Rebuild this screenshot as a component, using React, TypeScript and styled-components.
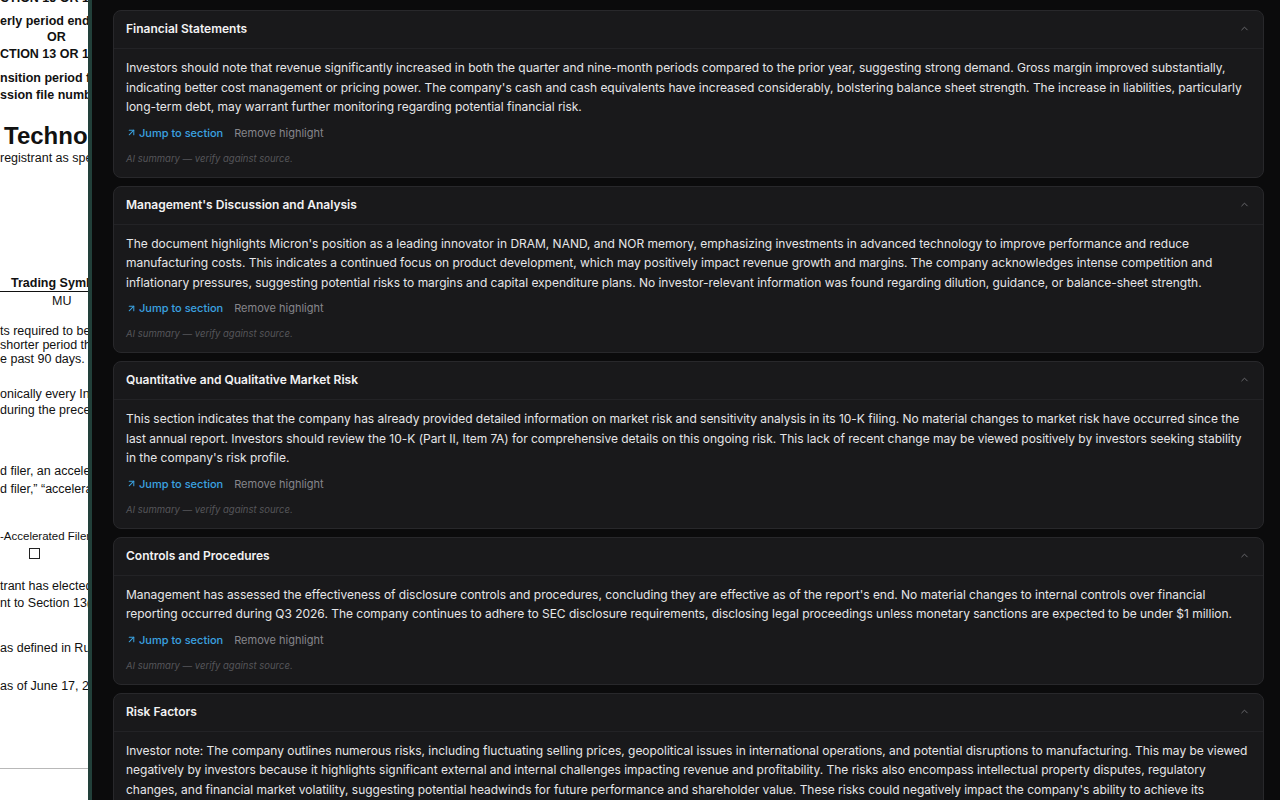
import React from 'react';
import styled, { createGlobalStyle } from 'styled-components';
import { ArrowUpRight, ChevronUp } from 'lucide-react';

const GlobalStyle = createGlobalStyle`
  html, body {
    margin: 0;
    height: 100%;
    background: #0b0b0c;
    overflow: hidden;
  }

  #root {
    height: 100%;
  }
`;

type Section = {
  title: string;
  summary: string;
};

const sections: Section[] = [
  {
    title: 'Financial Statements',
    summary:
      "Investors should note that revenue significantly increased in both the quarter and nine-month periods compared to the prior year, suggesting strong demand. Gross margin improved substantially, indicating better cost management or pricing power. The company's cash and cash equivalents have increased considerably, bolstering balance sheet strength. The increase in liabilities, particularly long-term debt, may warrant further monitoring regarding potential financial risk.",
  },
  {
    title: "Management's Discussion and Analysis",
    summary:
      "The document highlights Micron's position as a leading innovator in DRAM, NAND, and NOR memory, emphasizing investments in advanced technology to improve performance and reduce manufacturing costs. This indicates a continued focus on product development, which may positively impact revenue growth and margins. The company acknowledges intense competition and inflationary pressures, suggesting potential risks to margins and capital expenditure plans. No investor-relevant information was found regarding dilution, guidance, or balance-sheet strength.",
  },
  {
    title: 'Quantitative and Qualitative Market Risk',
    summary:
      "This section indicates that the company has already provided detailed information on market risk and sensitivity analysis in its 10-K filing. No material changes to market risk have occurred since the last annual report. Investors should review the 10-K (Part II, Item 7A) for comprehensive details on this ongoing risk. This lack of recent change may be viewed positively by investors seeking stability in the company's risk profile.",
  },
  {
    title: 'Controls and Procedures',
    summary:
      "Management has assessed the effectiveness of disclosure controls and procedures, concluding they are effective as of the report's end. No material changes to internal controls over financial reporting occurred during Q3 2026. The company continues to adhere to SEC disclosure requirements, disclosing legal proceedings unless monetary sanctions are expected to be under $1 million.",
  },
  {
    title: 'Risk Factors',
    summary:
      "Investor note: The company outlines numerous risks, including fluctuating selling prices, geopolitical issues in international operations, and potential disruptions to manufacturing. This may be viewed negatively by investors because it highlights significant external and internal challenges impacting revenue and profitability. The risks also encompass intellectual property disputes, regulatory changes, and financial market volatility, suggesting potential headwinds for future performance and shareholder value. These risks could negatively impact the company's ability to achieve its strategic goals and sustain its competitive position over time.",
  },
];

type DocLineProps = {
  $gap?: number;
  $lh?: number;
  $size?: number;
  $bold?: boolean;
  $indent?: number;
};

export default function App() {
  return (
    <>
      <GlobalStyle />
      <Layout>
        <DocPane>
          <DocLine $bold $gap={-10}>CTION 15 OR 15(d)</DocLine>
          <DocLine $bold $gap={7}>erly period ended</DocLine>
          <DocLine $bold $indent={47}>OR</DocLine>
          <DocLine $bold $gap={1}>CTION 13 OR 15(d)</DocLine>
          <DocLine $bold $gap={8}>nsition period from</DocLine>
          <DocLine $bold $gap={1}>ssion file number</DocLine>
          <DocLine $bold $size={24} $lh={28} $gap={19} $indent={4}>
            Technology
          </DocLine>
          <DocLine>registrant as specified</DocLine>
          <TableHead>
            <DocLine $bold $gap={109} $indent={11}>
              Trading Symbol
            </DocLine>
          </TableHead>
          <DocLine $gap={1} $indent={52}>MU</DocLine>
          <DocPara $gap={15} $lh={14}>
            <span>ts required to be filed</span>
            <span>shorter period that</span>
            <span>e past 90 days.</span>
          </DocPara>
          <DocPara $gap={20} $lh={16}>
            <span>onically every Interactive</span>
            <span>during the preceding</span>
          </DocPara>
          <DocPara $gap={44} $lh={18}>
            <span>d filer, an accelerated</span>
            <span>d filer,” “accelerated</span>
          </DocPara>
          <DocLine $gap={31} $lh={14} $size={11.5}>
            -Accelerated Filer
          </DocLine>
          <Checkbox />
          <DocPara $gap={19} $lh={17}>
            <span>trant has elected not</span>
            <span>nt to Section 13(a)</span>
          </DocPara>
          <DocLine $gap={28}>as defined in Rule</DocLine>
          <DocLine $gap={22}>as of June 17, 2026</DocLine>
          <PageRule />
        </DocPane>
        <Divider />
        <Panel>
          {sections.map((s) => (
            <Card key={s.title}>
              <CardHeader>
                <CardTitle>{s.title}</CardTitle>
                <ChevronUp size={11} strokeWidth={2} color="#6e6e73" />
              </CardHeader>
              <CardBody>
                <Summary>{s.summary}</Summary>
                <Actions>
                  <JumpLink>
                    <ArrowUpRight size={11} strokeWidth={2.2} />
                    Jump to section
                  </JumpLink>
                  <RemoveLink>Remove highlight</RemoveLink>
                </Actions>
                <Disclaimer>AI summary — verify against source.</Disclaimer>
              </CardBody>
            </Card>
          ))}
        </Panel>
      </Layout>
    </>
  );
}

const Layout = styled.div`
  display: flex;
  height: 100vh;
  overflow: hidden;
`;

const DocPane = styled.div`
  flex: 0 0 88px;
  background: #ffffff;
  overflow: hidden;
  color: #111111;
  font-family: 'Liberation Sans', Arial, sans-serif;
  font-size: 12.5px;
`;

const DocLine = styled.div<DocLineProps>`
  margin-top: ${(p) => p.$gap ?? 0}px;
  padding-left: ${(p) => p.$indent ?? 0}px;
  line-height: ${(p) => p.$lh ?? 16}px;
  font-size: ${(p) => p.$size ?? 12.5}px;
  font-weight: ${(p) => (p.$bold ? 700 : 400)};
  white-space: nowrap;
`;

const DocPara = styled.div<DocLineProps>`
  display: flex;
  flex-direction: column;
  margin-top: ${(p) => p.$gap ?? 0}px;
  line-height: ${(p) => p.$lh ?? 16}px;
  white-space: nowrap;
`;

const TableHead = styled.div`
  border-bottom: 1px solid #111111;
`;

const Checkbox = styled.div`
  width: 9px;
  height: 9px;
  margin: 5px 0 0 29px;
  border: 1px solid #222222;
`;

const PageRule = styled.div`
  height: 1px;
  margin-top: 74px;
  background: #b8b8b8;
`;

const Divider = styled.div`
  flex: 0 0 4px;
  background: #22403a;
`;

const Panel = styled.div`
  flex: 1;
  display: flex;
  flex-direction: column;
  gap: 8px;
  padding: 10px 16px 0 21px;
  overflow: hidden;
  background: #0b0b0c;
  font-family: Inter, 'Noto Sans', sans-serif;
`;

const Card = styled.section`
  flex-shrink: 0;
  background: #19191b;
  border: 1px solid #28282b;
  border-radius: 8px;
`;

const CardHeader = styled.header`
  display: flex;
  align-items: center;
  justify-content: space-between;
  box-sizing: border-box;
  height: 38px;
  padding: 0 13px 2px 12px;
  border-bottom: 1px solid #232326;
`;

const CardTitle = styled.h3`
  margin: 0;
  font-size: 12px;
  font-weight: 600;
  color: #f2f2f3;
`;

const CardBody = styled.div`
  padding: 9px 12px 11px;
`;

const Summary = styled.p`
  margin: 0;
  font-size: 12px;
  line-height: 19.5px;
  letter-spacing: -0.02px;
  color: #e6e6e8;
`;

const Actions = styled.div`
  display: flex;
  align-items: center;
  gap: 11px;
  margin-top: 8px;
  line-height: 16px;
  font-size: 11px;
`;

const JumpLink = styled.span`
  display: inline-flex;
  align-items: center;
  gap: 2px;
  color: #3ba2e0;
  font-weight: 500;
`;

const RemoveLink = styled.span`
  color: #86868b;
`;

const Disclaimer = styled.div`
  margin-top: 11px;
  line-height: 14px;
  font-size: 9.5px;
  font-style: italic;
  color: #56565a;
`;
